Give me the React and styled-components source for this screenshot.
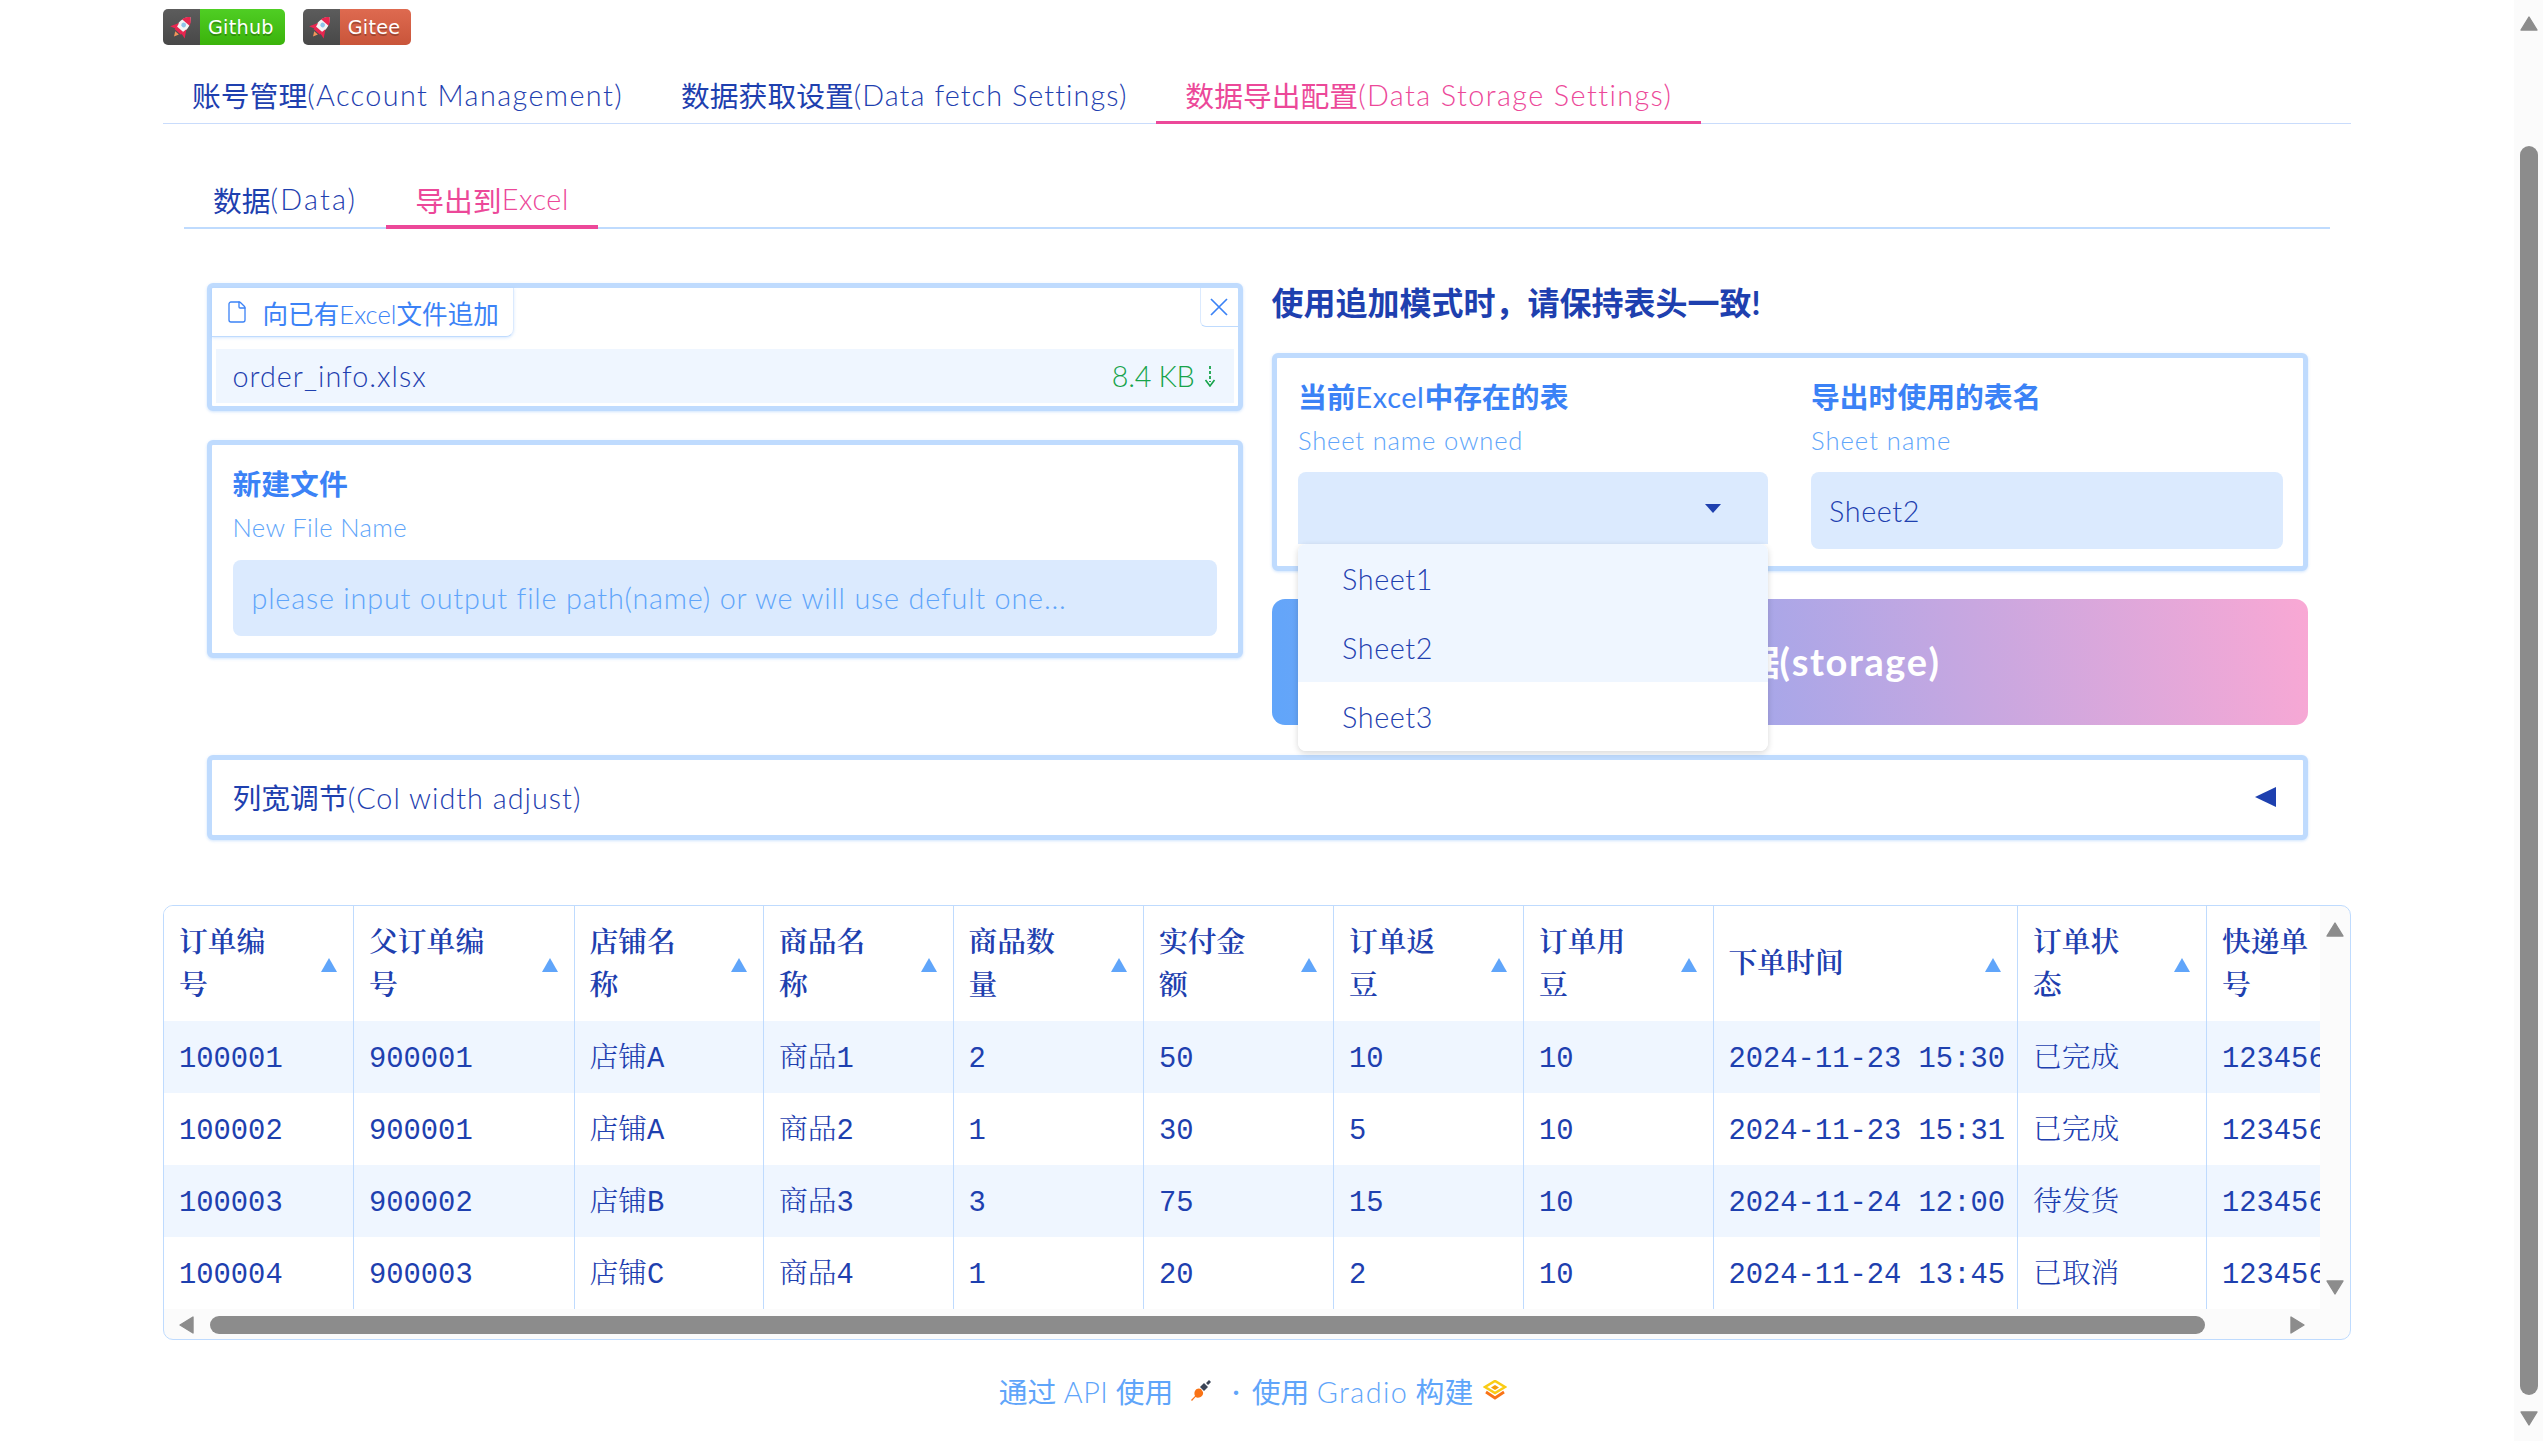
import React from 'react';
import styled, { createGlobalStyle } from 'styled-components';
import { File as FileIcon } from 'lucide-react';

const SANS = '"Lato", "Noto Sans CJK SC", sans-serif';
const TABLE = '"Liberation Mono", "Noto Serif CJK SC", "Noto Sans CJK SC", serif';

const Global = createGlobalStyle`
  html, body { margin: 0; height: 100%; overflow: hidden; background: #fff; }
  * { box-sizing: border-box; }
`;
const Root = styled.div`display: flex; height: 1441px; font-family: ${SANS}; color: #1e40af;`;
const Main = styled.main`flex: 1; min-width: 0; padding: 9px 163px 0; overflow: hidden;`;

const PageBar = styled.div`
  width: 29px; background: #fbfbfb; padding: 16px 5px 15px 6px;
  display: flex; flex-direction: column; align-items: center;
`;
const PageThumb = styled.div`width: 18px; height: 1251px; margin: 115px 0 16px; background: #8c8c8c; border-radius: 9px;`;

const Arrow = ({ dir }) => {
  const pts = { up: '9,1 17,14 1,14', down: '1,1 17,1 9,14', left: '14,1 14,17 1,9', right: '1,1 1,17 14,9' }[dir];
  const vertical = dir === 'up' || dir === 'down';
  return (
    <svg width={vertical ? 18 : 15} height={vertical ? 15 : 18} viewBox={vertical ? '0 0 18 15' : '0 0 15 18'} style={{ display: 'block', flex: 'none' }}>
      <polygon points={pts} fill="#8c8c8c" stroke="#8c8c8c" strokeWidth="1.4" strokeLinejoin="round" />
    </svg>
  );
};

/* badges */
const Badges = styled.div`display: flex; gap: 18px; height: 36px;`;
const Badge = styled.a`display: flex; height: 36px; border-radius: 5px; overflow: hidden;`;
const BadgeIcon = styled.span`
  width: 37px; display: flex; align-items: center; justify-content: center;
  background: linear-gradient(#5c5c5c, #484848);
`;
const BadgeText = styled.span`
  padding: 0 11px 0 8px; display: flex; align-items: center; letter-spacing: 0.25px;
  background: linear-gradient(${p => p.$from}, ${p => p.$to});
  color: #fff; font: 19.2px "DejaVu Sans", sans-serif; text-shadow: 0 1.5px 0 rgba(0,0,0,.25);
`;
const Rocket = () => (
  <svg width="26" height="26" viewBox="0 0 22 22">
    <g transform="rotate(40 11 11)">
      <path d="M11 0 C15.5 4 16 9 15 15 L7 15 C6 9 6.5 4 11 0Z" fill="#f4f4f4" />
      <path d="M11 0 C13.4 2 14.6 3.5 15.2 6 L6.8 6 C7.4 3.5 8.6 2 11 0Z" fill="#e8264f" />
      <path d="M7 10 L3 17 L8 15.5Z M15 10 L19 17 L14 15.5Z" fill="#e8264f" />
      <rect x="7.5" y="13.5" width="7" height="3" fill="#e8264f" />
      <circle cx="11" cy="8.8" r="2" fill="#8fc4ea" />
      <path d="M9 17.5 L13 17.5 L11 21.5Z" fill="#f2955a" />
    </g>
  </svg>
);

/* tabs */
const TabBar = styled.div`display: flex; height: 55px; margin-top: 24px; border-bottom: 1.5px solid #c9dcfc;`;
const Tab = styled.div`
  height: 55px; padding: 0 29px 1px; display: flex; align-items: center; white-space: nowrap;
  font-size: 28.8px; color: ${p => (p.$active ? '#ec4899' : '#1e40af')};
  border-bottom: 3px solid ${p => (p.$active ? '#ec4899' : 'transparent')};
`;
const Lat = styled.span`letter-spacing: ${p => p.$ls ?? 1.1}px; font-weight: ${p => p.$w ?? 300};`;
const SubBar = styled.div`display: flex; height: 57px; margin: 48px 21px 0; border-bottom: 2px solid #bfdbfe;`;
const SubTab = styled(Tab)`height: 57px; padding: 1px 29px 0; border-bottom-width: 4px;`;

/* panels */
const Content = styled.div`padding: 54px 43px 0 43.5px;`;
const Columns = styled.div`display: grid; grid-template-columns: 1fr 1fr; gap: 29px;`;
const Stack = styled.div`display: flex; flex-direction: column;`;
const Card = styled.section`
  position: relative; background: #fff; border: 5px solid #bfdbfe; border-radius: 6px;
  box-shadow: 0 1px 3px rgba(96,165,250,.3);
`;
const FileCard = styled(Card)`height: 128px; padding: 0 4px 3px 0;`;
const Chip = styled.div`
  width: 302px; height: 49px; padding-left: 13px; display: flex; align-items: center; gap: 14px;
  border-right: 1.5px solid #dbeafe; border-bottom: 1.5px solid #bfdbfe; border-bottom-right-radius: 8px;
  font-size: 25.6px; color: #3b82f6; box-shadow: 0 1px 3px rgba(96,165,250,.25);
`;
const Close = styled.div`
  position: absolute; top: 0; right: 0; width: 38px; height: 39px;
  display: flex; align-items: center; justify-content: center;
  border-left: 1.5px solid #dbeafe; border-bottom: 1.5px solid #bfdbfe; border-bottom-left-radius: 6px;
`;
const FileRow = styled.div`
  height: 54px; margin: 12px 0 0 4px; padding: 0 18px 0 17px; background: #eff6ff;
  display: flex; align-items: center; justify-content: space-between; font-size: 28.8px;
`;
const FileSize = styled.span`display: flex; align-items: center; gap: 9px; color: #16a34a;`;
const FormCard = styled(Card)`height: 218px; margin-top: 29px; padding: 21px 21px 0;`;
const Title = styled.div`font-size: 28.8px; line-height: 36px; font-weight: 700; color: #3b82f6; white-space: nowrap;`;
const Sub = styled.div`font-size: 25.6px; line-height: 36px; margin: 7px 0 ${p => p.$mb ?? 14}px; color: #60a5fa;`;
const Input = styled.div`
  height: ${p => p.$h}px; padding-left: ${p => p.$pl}px; border-radius: 8px; background: #dbeafe;
  display: flex; align-items: center; font-size: 28.8px; color: ${p => p.$c || '#1e40af'}; white-space: nowrap;
`;
const Heading = styled.h3`
  margin: 0 0 30px; height: 40px; line-height: 40px; font-size: 32px; font-weight: 700; color: #1e40af; white-space: nowrap;
`;
const SheetCard = styled(Card)`height: 218px; padding: 21px 20px 0 21.5px; display: grid; grid-template-columns: 470px 472px; gap: 43px;`;
const SelectWrap = styled.div`position: relative;`;
const Select = styled.div`
  height: 72px; padding-right: 47px; background: #dbeafe; border-radius: 8px 8px 0 0;
  display: flex; align-items: center; justify-content: flex-end;
`;
const Menu = styled.ul`
  position: absolute; z-index: 10; left: 0; right: 0; top: 72px; margin: 0; padding: 0; list-style: none;
  background: #fff; border-radius: 8px; overflow: hidden; box-shadow: 0 2px 6px rgba(0,0,0,.16);
`;
const MenuItem = styled.li`
  height: 69px; padding-left: 44px; display: flex; align-items: center; font-size: 28.8px;
  background: ${p => (p.$on ? '#eff6ff' : '#fff')};
`;
const Submit = styled.button`
  margin-top: 28px; height: 126px; border: 0; border-radius: 13px; padding: 0 0 3px; font-family: ${SANS};
  background: linear-gradient(80deg, #60a5fa, #f9a8d4);
  color: #fff; font-size: 35.2px; font-weight: 700;
`;
const SubmitLat = styled(Lat)`font-size: 38px;`;
const Accordion = styled(Card)`
  margin-top: 30px; height: 85px; padding: 0 27px 2px 21px;
  display: flex; align-items: center; justify-content: space-between; font-size: 28.8px;
`;

/* table */
const TableBox = styled.div`
  margin-top: 65px; height: 435px; border: 1.6px solid #bfdbfe; border-radius: 10px; overflow: hidden;
  display: grid; grid-template: 1fr 30px / 1fr 30px; font-family: ${TABLE}; background: #fbfbfb;
`;
const Viewport = styled.div`overflow: hidden; min-width: 0; min-height: 0; background: #fff;`;
const Tbl = styled.table`border-collapse: collapse; table-layout: fixed; width: 2268px;`;
const Th = styled.th`
  height: 115px; padding: 4px 16px 0 15px; font-weight: 600; font-size: 28.8px; line-height: 43px; text-align: left;
  border-right: 1.6px solid #bfdbfe; vertical-align: middle; white-space: nowrap;
`;
const ThInner = styled.div`display: flex; align-items: center; justify-content: space-between;`;
const Line = styled.span`display: block;`;
const Td = styled.td`
  height: 72px; padding: 5px 0 0 15px; font-size: 28.8px; line-height: 67px; white-space: nowrap; overflow: hidden;
  border-right: 1.6px solid #bfdbfe; font-weight: 300;
`;
const Tr = styled.tr`background: ${p => (p.$alt ? '#eff6ff' : '#fff')};`;
const VBar = styled.div`
  padding: 16px 6px 14px 6px; display: flex; flex-direction: column; justify-content: space-between;
`;
const HBar = styled.div`
  grid-column: 1 / 3; padding: 7px 0 0 15px; display: flex; align-items: flex-start;
`;
const HThumb = styled.div`width: 1995px; height: 18px; margin: 0 85px 0 16px; border-radius: 9px; background: #8c8c8c;`;

/* footer */
const Footer = styled.footer`
  height: 60px; margin-top: 20px; padding-right: 8px; display: flex; align-items: center; justify-content: center;
  font-size: 28.8px; color: #60a5fa;
`;
const FootDot = styled.span`margin: 0 12px 0 20px;`;
const FootIcon = styled.svg`margin-left: ${p => p.$ml}px; flex: none;`;
const SortIcon = styled.svg`flex: none; margin-top: -2px;`;

const cols = [
  [['订单编', '号'], 189.5], [['父订单编', '号'], 220.5], [['店铺名', '称'], 189.5], [['商品名', '称'], 189.5],
  [['商品数', '量'], 190.5], [['实付金', '额'], 190], [['订单返', '豆'], 190], [['订单用', '豆'], 189.5],
  [['下单时间'], 304.5], [['订单状', '态'], 189], [['快递单', '号'], 226],
];
const rows = [
  ['100001', '900001', '店铺A', '商品1', '2', '50', '10', '10', '2024-11-23 15:30', '已完成', '123456789'],
  ['100002', '900001', '店铺A', '商品2', '1', '30', '5', '10', '2024-11-23 15:31', '已完成', '123456790'],
  ['100003', '900002', '店铺B', '商品3', '3', '75', '15', '10', '2024-11-24 12:00', '待发货', '123456791'],
  ['100004', '900003', '店铺C', '商品4', '1', '20', '2', '10', '2024-11-24 13:45', '已取消', '123456792'],
];

const SortUp = () => (
  <SortIcon width="16" height="14" viewBox="0 0 16 14"><polygon points="8,0 16,14 0,14" fill="#60a5fa" /></SortIcon>
);

export default function App() {
  return (
    <Root>
      <Global />
      <Main>
        <Badges>
          <Badge><BadgeIcon><Rocket /></BadgeIcon><BadgeText $from="#4fce24" $to="#3bb30b">Github</BadgeText></Badge>
          <Badge><BadgeIcon><Rocket /></BadgeIcon><BadgeText $from="#de6a50" $to="#c9553a">Gitee</BadgeText></Badge>
        </Badges>
        <TabBar>
          <Tab>账号管理<Lat $ls={1.4}>(Account Management)</Lat></Tab>
          <Tab>数据获取设置<Lat $ls={1.05}>(Data fetch Settings)</Lat></Tab>
          <Tab $active>数据导出配置<Lat $ls={1.4}>(Data Storage Settings)</Lat></Tab>
        </TabBar>
        <SubBar>
          <SubTab>数据<Lat $ls={2.2}>(Data)</Lat></SubTab>
          <SubTab $active>导出到<Lat $ls={0.6}>Excel</Lat></SubTab>
        </SubBar>
        <Content>
          <Columns>
            <Stack>
              <FileCard>
                <Chip><FileIcon size={24} strokeWidth={1.3} color="#3b82f6" /><span>向已有<Lat $ls={0}>Excel</Lat>文件追加</span></Chip>
                <Close>
                  <svg width="18" height="18" viewBox="0 0 18 18"><path d="M1 1 L17 17 M17 1 L1 17" stroke="#3b82f6" strokeWidth="1.7" /></svg>
                </Close>
                <FileRow>
                  <Lat $ls={1}>order_info.xlsx</Lat>
                  <FileSize>
                    <Lat $ls={-0.3}>8.4 KB</Lat>
                    <svg width="12" height="21" viewBox="0 0 12 21"><path d="M6 0 V16" stroke="#16a34a" strokeWidth="1.8" strokeDasharray="3 2" /><path d="M1.5 14 L6 20 L10.5 14" stroke="#16a34a" strokeWidth="1.6" fill="none" /></svg>
                  </FileSize>
                </FileRow>
              </FileCard>
              <FormCard>
                <Title>新建文件</Title>
                <Sub $mb={15}><Lat $ls={0.4}>New File Name</Lat></Sub>
                <Input $h={76} $pl={19} $c="#60a5fa"><Lat $ls={0.8}>please input output file path(name) or we will use defult one...</Lat></Input>
              </FormCard>
            </Stack>
            <Stack>
              <Heading>使用追加模式时，请保持表头一致!</Heading>
              <SheetCard>
                <div>
                  <Title>当前<Lat $w={400} $ls={0.6}>Excel</Lat>中存在的表</Title>
                  <Sub><Lat $ls={0.8}>Sheet name owned</Lat></Sub>
                  <SelectWrap>
                    <Select>
                      <svg width="16" height="9" viewBox="0 0 16 9"><polygon points="0,0 16,0 8,9" fill="#1e40af" /></svg>
                    </Select>
                    <Menu>
                      <MenuItem $on><Lat $ls={0.6}>Sheet1</Lat></MenuItem>
                      <MenuItem $on><Lat $ls={0.6}>Sheet2</Lat></MenuItem>
                      <MenuItem><Lat $ls={0.6}>Sheet3</Lat></MenuItem>
                    </Menu>
                  </SelectWrap>
                </div>
                <div>
                  <Title>导出时使用的表名</Title>
                  <Sub><Lat $ls={1}>Sheet name</Lat></Sub>
                  <Input $h={77} $pl={18}><Lat $ls={0.6}>Sheet2</Lat></Input>
                </div>
              </SheetCard>
              <Submit>导出数据<SubmitLat $ls={1.6} $w={700}>(storage)</SubmitLat></Submit>
            </Stack>
          </Columns>
          <Accordion>
            <span>列宽调节<Lat $ls={1}>(Col width adjust)</Lat></span>
            <svg width="21" height="20" viewBox="0 0 21 20"><polygon points="21,0 21,20 0,10" fill="#1e40af" /></svg>
          </Accordion>
        </Content>
        <TableBox>
          <Viewport>
            <Tbl>
              <colgroup>{cols.map(([, w], i) => <col key={i} style={{ width: w }} />)}</colgroup>
              <thead>
                <tr>
                  {cols.map(([lines], i) => (
                    <Th key={i}>
                      <ThInner>
                        <div>{lines.map(l => <Line key={l}>{l}</Line>)}</div>
                        {i < 10 && <SortUp />}
                      </ThInner>
                    </Th>
                  ))}
                </tr>
              </thead>
              <tbody>
                {rows.map((r, i) => (
                  <Tr key={i} $alt={i % 2 === 0}>
                    {r.map((c, j) => <Td key={j}>{c}</Td>)}
                  </Tr>
                ))}
              </tbody>
            </Tbl>
          </Viewport>
          <VBar><Arrow dir="up" /><Arrow dir="down" /></VBar>
          <HBar><Arrow dir="left" /><HThumb /><Arrow dir="right" /></HBar>
        </TableBox>
        <Footer>
          <span>通过 <Lat $ls={0.5}>API</Lat> 使用</span>
          <FootIcon $ml={17} width="22" height="22" viewBox="0 0 22 22">
            <path d="M1 21 L5 17 C3 12 7 8 11 10 L13 13 C14 17 9 20 5.5 18 L2 22Z" fill="#f97316" />
            <path d="M10 8 L14 4 L18 8 L14 12Z M16 4 L19 1 L21 3 L18 6Z" fill="#3b4557" />
          </FootIcon>
          <FootDot>·</FootDot>
          <span>使用 <Lat $ls={1.4}>Gradio</Lat> 构建</span>
          <FootIcon $ml={10} width="24" height="21" viewBox="0 0 24 21">
            <path d="M12 1 L22 7 L12 13 L2 7Z" fill="none" stroke="#facc15" strokeWidth="2.6" />
            <path d="M3 12 L12 18 L21 12" fill="none" stroke="#f97316" strokeWidth="2.8" />
            <path d="M12 5 L16 7.5 L12 10 L8 7.5Z" fill="#f59e0b" />
          </FootIcon>
        </Footer>
      </Main>
      <PageBar>
        <Arrow dir="up" />
        <PageThumb />
        <Arrow dir="down" />
      </PageBar>
    </Root>
  );
}
